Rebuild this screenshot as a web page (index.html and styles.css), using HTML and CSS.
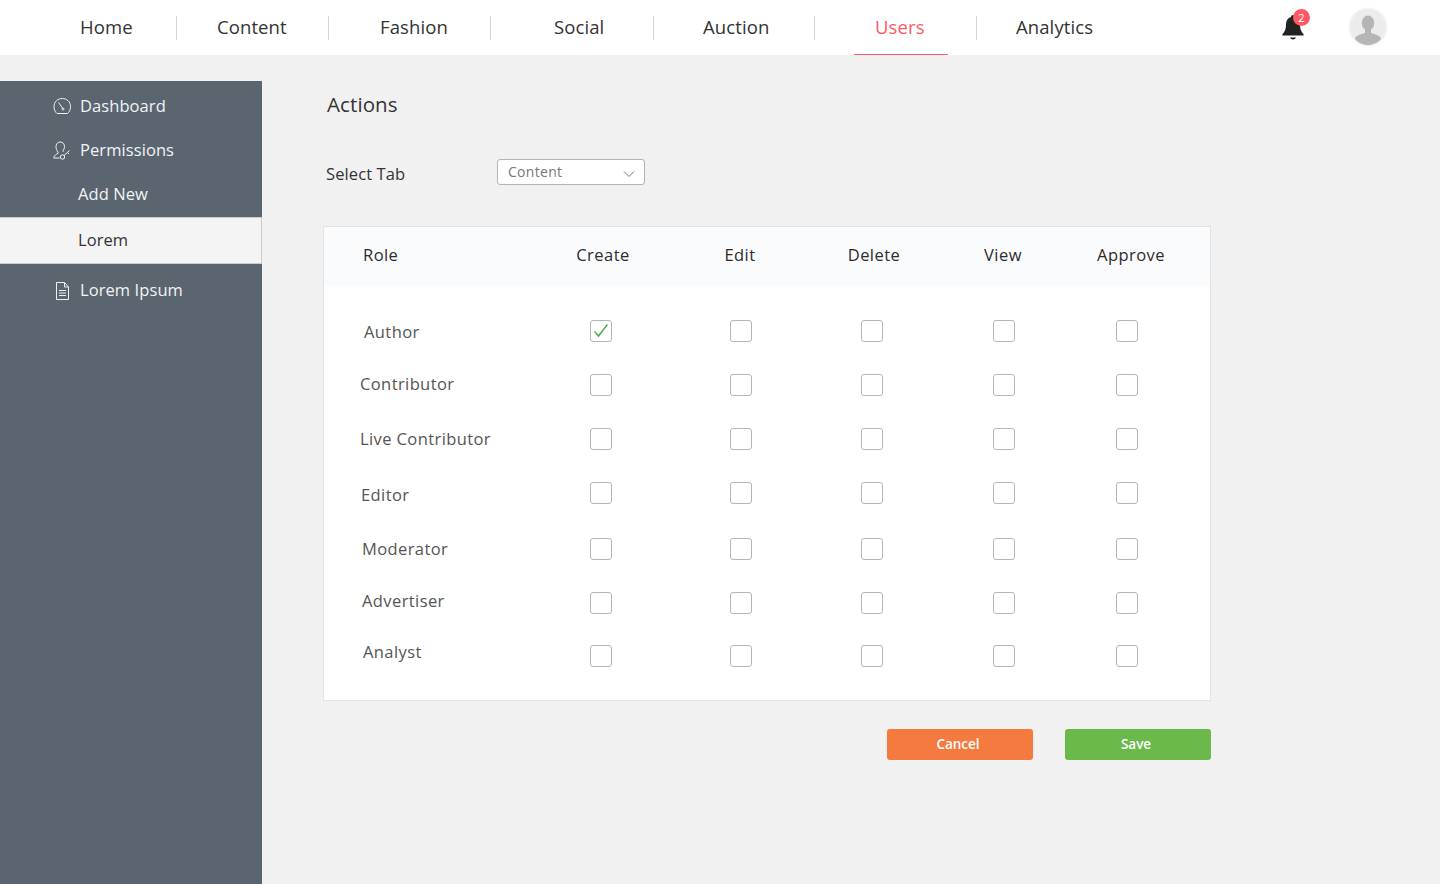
FILE: index.html
```html
<!DOCTYPE html>
<html lang="en">
<head>
    <meta charset="UTF-8">
    <meta name="viewport" content="width=device-width, initial-scale=1.0">
    <title>Actions</title>
    <link rel="stylesheet" href="styles.css">
</head>
<body>

    <header class="topbar">
        <nav class="nav">
            <a class="nav-item nav-home">Home</a>
            <a class="nav-item nav-content">Content</a>
            <a class="nav-item nav-fashion">Fashion</a>
            <a class="nav-item nav-social">Social</a>
            <a class="nav-item nav-auction">Auction</a>
            <a class="nav-item nav-users"><span class="nav-active">Users</span></a>
            <a class="nav-item nav-analytics">Analytics</a>
        </nav>
        <div class="bell">
            <svg width="26" height="30" viewBox="0 0 26 30">
                <path fill="#222" d="M13 3c1.200 0 2 .8 2 1.900 3.400.9 5 3.700 5 7.400 0 4.700 1 7.500 3.600 9.900v1.300H2.400v-1.300C5 19.800 6 17 6 12.300c0-3.700 1.600-6.500 5-7.400C11 3.800 11.800 3 13 3z"/>
                <path fill="#222" d="M10 25.500h6c-.5 1.300-1.600 2-3 2s-2.500-.7-3-2z"/>
            </svg>
            <span class="badge">2</span>
        </div>
        <div class="avatar">
            <svg width="36" height="36" viewBox="0 0 36 36">
                <circle cx="18" cy="18" r="18" fill="#ececec"/>
                <ellipse cx="18" cy="14" rx="6.200" ry="7.500" fill="#b5b5b5"/>
                <path fill="#b5b5b5" d="M15 19h6v5c2 1 9 1.500 10 6-3 3.500-8 6-13 6S8 33.500 5 30c1-4.500 8-5 10-6z"/>
            </svg>
        </div>
    </header>

    <div class="layout">
        <aside class="sidebar">
            <a class="side-item">
                <svg class="side-icon icon-dash" width="18" height="18" viewBox="0 0 18 18" fill="none" stroke="#eef0f1" stroke-width="1">
                    <path d="M4 16.500h10.500c2-1.500 3-4 3-7 0-4.700-3.800-8-8.250-8S1 4.800 1 9.500c0 3 1 5.500 3 7z"/>
                    <path d="M5.500 5.500l4 5.500"/>
                    <circle cx="10" cy="12" r="1"/>
                </svg>
                Dashboard
            </a>
            <a class="side-item">
                <svg class="side-icon icon-perm" width="18" height="20" viewBox="0 0 18 20" fill="none" stroke="#eef0f1" stroke-width="1">
                    <path d="M5 11c-1.400-1.500-2-3.300-2-5.300C3 3 4.800 1 7.300 1s4.200 2 4.200 4.600c0 1.400-.5 2.900-1.400 4v1.200"/>
                    <path d="M5 11v1.300c-1.500 1-3.800 1.600-4.300 4.700h6"/>
                    <circle cx="9.500" cy="16" r="2.200"/>
                    <path d="M11 14.500l5.500-5M14.500 11.500l1.500 1.500"/>
                </svg>
                Permissions
            </a>
            <a class="side-item side-sub">Add New</a>
            <a class="side-item side-selected">Lorem</a>
            <a class="side-item side-last">
                <svg class="side-icon icon-doc" width="18" height="20" viewBox="0 0 18 20" fill="none" stroke="#eef0f1" stroke-width="1">
                    <path d="M3.500 1.500h8l4 4.500v12.500h-12z"/>
                    <path d="M11.500 1.500v4.500h4M6 9.500h7M6 12h7M6 14.500h7"/>
                </svg>
                Lorem Ipsum
            </a>
        </aside>

        <main class="main">
            <h1 class="title">Actions</h1>

            <div class="tab-row">
                <label class="tab-label">Select Tab</label>
                <div class="select">
                    <span>Content</span>
                    <svg width="12" height="8" viewBox="0 0 12 8" fill="none" stroke="#777" stroke-width="1"><path d="M1 1.500l5 5 5-5"/></svg>
                </div>
            </div>

            <section class="card">
                <div class="head-row">
                    <div class="head-role">Role</div>
                    <div>Create</div>
                    <div>Edit</div>
                    <div>Delete</div>
                    <div>View</div>
                    <div>Approve</div>
                </div>

                <div class="rows">
                    <div class="row">
                        <div class="role role-author">Author</div>
                        <span class="check"><svg width="14" height="14" viewBox="0 0 14 14" fill="none" stroke="#4faa4f" stroke-width="1.500"><path d="M.5 7.500l4 4.500 9-11.500"/></svg></span>
                        <span class="check"></span><span class="check"></span><span class="check"></span><span class="check"></span>
                    </div>
                    <div class="row">
                        <div class="role role-contributor">Contributor</div>
                        <span class="check"></span><span class="check"></span><span class="check"></span><span class="check"></span><span class="check"></span>
                    </div>
                    <div class="row">
                        <div class="role role-live">Live Contributor</div>
                        <span class="check"></span><span class="check"></span><span class="check"></span><span class="check"></span><span class="check"></span>
                    </div>
                    <div class="row">
                        <div class="role role-editor">Editor</div>
                        <span class="check"></span><span class="check"></span><span class="check"></span><span class="check"></span><span class="check"></span>
                    </div>
                    <div class="row row-moderator">
                        <div class="role role-moderator">Moderator</div>
                        <span class="check"></span><span class="check"></span><span class="check"></span><span class="check"></span><span class="check"></span>
                    </div>
                    <div class="row">
                        <div class="role role-advertiser">Advertiser</div>
                        <span class="check"></span><span class="check"></span><span class="check"></span><span class="check"></span><span class="check"></span>
                    </div>
                    <div class="row row-analyst">
                        <div class="role role-analyst">Analyst</div>
                        <span class="check"></span><span class="check"></span><span class="check"></span><span class="check"></span><span class="check"></span>
                    </div>
                </div>
            </section>

            <div class="actions">
                <button class="btn btn-cancel" type="button">Cancel</button>
                <button class="btn btn-save" type="button">Save</button>
            </div>
        </main>
    </div>

</body>
</html>
```

FILE: styles.css
```css
body {
    font-family: "Open Sans", Arial, sans-serif;
    background-color: #f1f1f1;
    color: #333;
    margin: 0;
    height: 884px;
    overflow: hidden;
}

/* Top bar */
.topbar {
    display: flex;
    height: 55px;
    background-color: #fff;
    position: relative;
}
.nav {
    display: flex;
    margin-top: 16px;
    height: 24px;
    width: 1277px;
}
.nav-item {
    font-size: 18.500px;
    letter-spacing: .1px;
    line-height: 22px;
    color: #333;
    border-right: 1px solid #d5d5d5;
    box-sizing: border-box;
}
.nav-home { width: 177px; padding-left: 80px; }
.nav-content { width: 152px; padding-left: 40px; }
.nav-fashion { width: 162px; padding-left: 51px; }
.nav-social { width: 163px; padding-left: 63px; }
.nav-auction { width: 161px; padding-left: 49px; }
.nav-users { width: 162px; padding-left: 39px; color: #ff5a64; }
.nav-analytics { padding-left: 39px; border-right: 0; }
.nav-active {
    display: block;
    width: 94px;
    height: 39px;
    padding-left: 21px;
    box-sizing: border-box;
    border-bottom: 1px solid #ff5a64;
}
.bell {
    position: relative;
    width: 26px;
    height: 30px;
    margin-top: 12px;
    margin-left: 3px;
}
.badge {
    position: absolute;
    top: -3px;
    left: 13px;
    width: 17px;
    height: 17px;
    border-radius: 50%;
    background-color: #ff5a64;
    color: #fff;
    font-size: 11px;
    line-height: 17px;
    text-align: center;
}
.avatar {
    width: 36px;
    height: 36px;
    margin: 9px 0 0 44px;
    border-radius: 50%;
    box-shadow: 0 0 0 1.500px #f3f3f3;
}

/* Page */
.layout {
    display: flex;
    margin-top: 26px;
}
.sidebar {
    width: 262px;
    height: 803px;
    padding-top: 3px;
    box-sizing: border-box;
    background-color: #5a6570;
}
.side-item {
    display: flex;
    align-items: center;
    gap: 9px;
    height: 44px;
    padding-left: 53px;
    padding-bottom: 2px;
    box-sizing: border-box;
    font-size: 16.500px;
    letter-spacing: .08px;
    color: #f2f3f4;
}
.side-icon {
    flex: none;
    width: 18px;
}
.icon-dash { margin-top: 2px; }
.icon-perm { margin-top: 3px; }
.icon-doc { margin-top: 3px; }
.side-sub {
    padding-left: 78px;
}
.side-selected {
    height: 47px;
    margin-top: 1px;
    padding-left: 78px;
    background-color: #f3f4f3;
    color: #333;
    border-top: 1px solid #c9cccf;
    border-bottom: 1px solid #c9cccf;
    border-right: 1px solid #c9cccf;
}
.side-last {
    margin-top: 4px;
}
.main {
    padding: 0 0 0 61px;
    width: 888px;
}
.title {
    margin: 9px 0 0 4px;
    font-size: 20.500px;
    letter-spacing: .1px;
    line-height: 28px;
    font-weight: 400;
}
.tab-row {
    display: flex;
    margin: 41px 0 0 3px;
    height: 26px;
}
.tab-label {
    width: 171px;
    padding-top: 3px;
    font-size: 16.500px;
    letter-spacing: .1px;
    line-height: 24px;
}
.select {
    display: flex;
    align-items: center;
    justify-content: space-between;
    width: 148px;
    height: 26px;
    padding: 0 9px 2px 10px;
    box-sizing: border-box;
    background-color: #fff;
    border: 1px solid #b5b5b5;
    border-radius: 3px;
    font-size: 14px;
    letter-spacing: .3px;
    color: #777;
}
.select svg {
    margin-top: 5px;
}

/* Permissions table */
.card {
    margin-top: 41px;
    height: 475px;
    box-sizing: border-box;
    background-color: #fff;
    border: 1px solid #e3e3e3;
}
.head-row {
    display: grid;
    grid-template-columns: 209px 140px 134px 134px 124px 132px;
    align-items: center;
    height: 59px;
    padding-bottom: 4px;
    box-sizing: border-box;
    background-color: #fafbfd;
    font-size: 16.500px;
    letter-spacing: .45px;
    font-weight: 500;
    color: #2b2b2b;
    text-align: center;
}
.head-role {
    padding-left: 39px;
    text-align: left;
}
.rows {
    padding-top: 18px;
}
.row {
    display: grid;
    grid-template-columns: 208px 138px 142px 120px 144px 102px;
    align-items: center;
    justify-items: center;
    height: 54px;
}
.row-moderator { margin-top: 2px; }
.row-analyst { margin-top: -1px; }
.role {
    justify-self: start;
    font-size: 16.500px;
    letter-spacing: .4px;
    color: #555;
}
.role-author { margin: 0 0 0 40px; }
.role-contributor { margin: -4px 0 0 36px; }
.role-live { margin: -2px 0 0 36px; }
.role-editor { margin: 2px 0 0 37px; }
.role-moderator { margin: -2px 0 0 38px; }
.role-advertiser { margin: -6px 0 0 38px; }
.role-analyst { margin: -10px 0 0 39px; }
.check {
    display: flex;
    align-items: center;
    justify-content: center;
    width: 22px;
    height: 22px;
    box-sizing: border-box;
    background-color: #fff;
    border: 1px solid #b5b5b5;
    border-radius: 3px;
}

/* Buttons */
.actions {
    display: flex;
    justify-content: flex-end;
    gap: 32px;
    margin-top: 28px;
}
.btn {
    width: 146px;
    height: 31px;
    padding: 0 4px 2px 0;
    border: 0;
    border-radius: 3px;
    font-family: inherit;
    font-size: 13.500px;
    font-weight: 600;
    color: #fff;
}
.btn-cancel { background-color: #f57a40; }
.btn-save { background-color: #6bb84b; }
```
